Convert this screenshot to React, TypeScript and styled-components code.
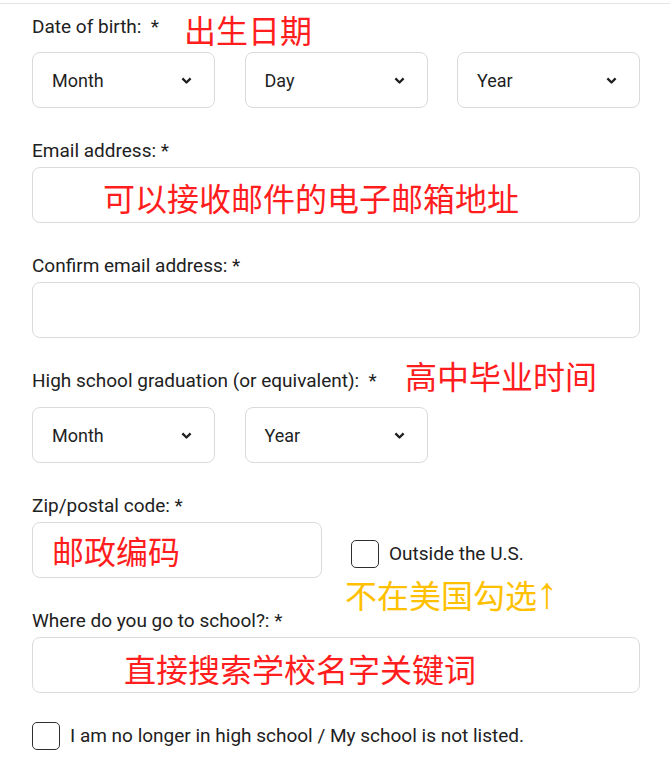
import React from 'react';
import styled, { createGlobalStyle } from 'styled-components';

const GlobalStyle = createGlobalStyle`
  html, body {
    margin: 0;
    padding: 0;
    background: #fff;
  }
  body {
    font-family: Roboto, "Noto Sans", "Liberation Sans", sans-serif;
    color: #212121;
  }
  * {
    box-sizing: border-box;
  }
`;

const Page = styled.div`
  width: 670px;
  min-height: 766px;
  background: #fff;
  padding-top: 3px;
`;

const TopRule = styled.hr`
  margin: 0;
  border: 0;
  height: 1px;
  background: #e4e4e4;
`;

const Form = styled.form`
  display: flex;
  flex-direction: column;
  padding: 13px 30px 0 32px;
`;

const Field = styled.div<{ $first?: boolean }>`
  margin-top: ${(p) => (p.$first ? 0 : 33)}px;
`;

const LabelRow = styled.div<{ $gap: number }>`
  position: relative;
  height: 20px;
  margin-bottom: ${(p) => p.$gap}px;
`;

const Label = styled.label`
  display: block;
  font-size: 19px;
  line-height: 20px;
  white-space: pre;
`;

const cjk = `"Noto Sans CJK SC", "Noto Sans", sans-serif`;

const Note = styled.span<{ $left: number; $top: number; $gold?: boolean }>`
  position: absolute;
  left: ${(p) => p.$left}px;
  top: ${(p) => p.$top}px;
  font-family: ${cjk};
  font-size: 32px;
  line-height: 32px;
  white-space: nowrap;
  color: ${(p) => (p.$gold ? '#ffc000' : '#ff1d1d')};
`;

const Arrow = styled.span`
  font-family: "Liberation Sans", sans-serif;
  font-size: 44px;
  line-height: 32px;
  margin-left: -1px;
`;

const SelectGrid = styled.div`
  display: grid;
  grid-template-columns: repeat(3, 183px);
  column-gap: 29.5px;
`;

const SelectBox = styled.div`
  height: 56px;
  display: flex;
  align-items: center;
  justify-content: space-between;
  padding: 0 22px 0 19px;
  border: 1px solid #dadada;
  border-radius: 8px;
  font-size: 18px;
  color: #1f1f1f;
`;

const TextBox = styled.div<{ $pad: number; $nudge?: number; $width?: number }>`
  height: 56px;
  width: ${(p) => (p.$width ? `${p.$width}px` : '100%')};
  flex-shrink: 0;
  display: flex;
  align-items: center;
  padding-left: ${(p) => p.$pad}px;
  padding-top: ${(p) => p.$nudge ?? 0}px;
  border: 1px solid #dadada;
  border-radius: 8px;
`;

const BoxNote = styled.span`
  font-family: ${cjk};
  font-size: 32px;
  line-height: 32px;
  white-space: nowrap;
  color: #ff1d1d;
`;

const ZipRow = styled.div`
  display: flex;
  align-items: flex-start;
  gap: 29px;
`;

const CheckGroup = styled.div<{ $offset?: number }>`
  position: relative;
  display: flex;
  align-items: center;
  gap: 10px;
  margin-top: ${(p) => p.$offset ?? 0}px;
`;

const CheckBox = styled.span`
  width: 28px;
  height: 28px;
  flex-shrink: 0;
  border: 1.5px solid #2e2e2e;
  border-radius: 5px;
  background: #fff;
`;

const CheckText = styled.span`
  font-size: 19px;
  line-height: 20px;
  color: #212121;
  white-space: nowrap;
`;

const Chevron = () => (
  <svg width="11" height="7" viewBox="0 0 11 7" aria-hidden="true">
    <path
      d="M1.4 1.4 L5.5 5.5 L9.6 1.4"
      fill="none"
      stroke="#1f1f1f"
      strokeWidth="2.3"
      strokeLinejoin="round"
    />
  </svg>
);

const Select = ({ label }: { label: string }) => (
  <SelectBox>
    <span>{label}</span>
    <Chevron />
  </SelectBox>
);

export default function App() {
  return (
    <Page>
      <GlobalStyle />
      <TopRule />
      <Form>
        <Field $first>
          <LabelRow $gap={15}>
            <Label>Date of birth:  *</Label>
            <Note $left={152} $top={-4}>出生日期</Note>
          </LabelRow>
          <SelectGrid>
            <Select label="Month" />
            <Select label="Day" />
            <Select label="Year" />
          </SelectGrid>
        </Field>

        <Field>
          <LabelRow $gap={6}>
            <Label>Email address: *</Label>
          </LabelRow>
          <TextBox $pad={70} $nudge={4}>
            <BoxNote>可以接收邮件的电子邮箱地址</BoxNote>
          </TextBox>
        </Field>

        <Field>
          <LabelRow $gap={6}>
            <Label>Confirm email address: *</Label>
          </LabelRow>
          <TextBox $pad={18} />
        </Field>

        <Field>
          <LabelRow $gap={16}>
            <Label>High school graduation (or equivalent):  *</Label>
            <Note $left={373} $top={-12}>高中毕业时间</Note>
          </LabelRow>
          <SelectGrid>
            <Select label="Month" />
            <Select label="Year" />
          </SelectGrid>
        </Field>

        <Field>
          <LabelRow $gap={6}>
            <Label>Zip/postal code: *</Label>
          </LabelRow>
          <ZipRow>
            <TextBox $pad={19} $width={290}>
              <BoxNote>邮政编码</BoxNote>
            </TextBox>
            <CheckGroup $offset={18}>
              <CheckBox />
              <CheckText>Outside the U.S.</CheckText>
              <Note $left={-6} $top={37} $gold>
                不在美国勾选<Arrow>↑</Arrow>
              </Note>
            </CheckGroup>
          </ZipRow>
        </Field>

        <Field>
          <LabelRow $gap={6}>
            <Label>Where do you go to school?: *</Label>
          </LabelRow>
          <TextBox $pad={91} $nudge={6}>
            <BoxNote>直接搜索学校名字关键词</BoxNote>
          </TextBox>
        </Field>

        <CheckGroup $offset={29}>
          <CheckBox />
          <CheckText>I am no longer in high school / My school is not listed.</CheckText>
        </CheckGroup>
      </Form>
    </Page>
  );
}
